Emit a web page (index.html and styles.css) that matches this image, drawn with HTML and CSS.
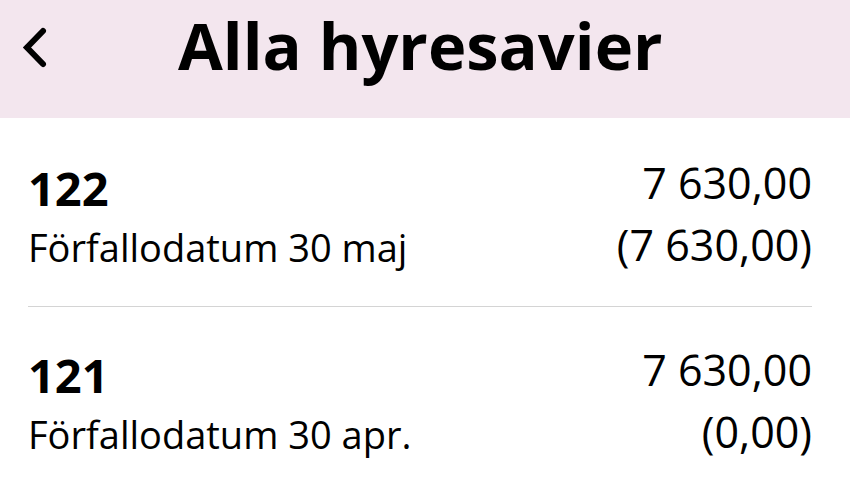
FILE: index.html
```html
<!DOCTYPE html>
<html lang="sv">
<head>
<meta charset="utf-8">
<link rel="stylesheet" href="styles.css">
</head>
<body>
<header class="topbar">
  <button class="back" aria-label="Tillbaka">
    <svg width="30" height="44" viewBox="0 0 30 44"><path d="M25 6 L9 22.5 L25 39" fill="none" stroke="#000" stroke-width="6" stroke-linecap="round" stroke-linejoin="miter"/></svg>
  </button>
  <h1 class="title">Alla hyresavier</h1>
</header>
<main class="list">
  <div class="row">
    <div class="left">
      <div class="num">122</div>
      <div class="due">Förfallodatum 30 maj</div>
    </div>
    <div class="right">
      <div class="amount">7 630,00</div>
      <div class="paid">(7 630,00)</div>
    </div>
  </div>
  <div class="row">
    <div class="left">
      <div class="num">121</div>
      <div class="due">Förfallodatum 30 apr.</div>
    </div>
    <div class="right">
      <div class="amount">7 630,00</div>
      <div class="paid">(0,00)</div>
    </div>
  </div>
</main>
</body>
</html>
```
FILE: styles.css
```css
* { box-sizing: border-box; }
html, body { margin: 0; padding: 0; background: #fff; }
body { font-family: "Open Sans", "Noto Sans", sans-serif; color: #000; width: 850px; height: 478px; overflow: hidden; }
.topbar {
  height: 118px;
  background: #f3e6ee;
  display: flex;
  align-items: flex-start;
  padding-left: 18px;
}
.back {
  background: none; border: 0; padding: 0; margin: 25px 0 0 0;
  width: 36px; height: 44px;
  display: flex; align-items: flex-start; justify-content: flex-start;
}
.back svg { display: block; }
.title {
  margin: 13px 0 0 124px;
  font-size: 65px;
  font-weight: 700;
  line-height: 64px;
}
.list { padding: 0 38px 0 28px; }
.row {
  display: flex;
  justify-content: space-between;
  align-items: flex-start;
  padding: 42px 0 21px;
  border-bottom: 1.5px solid #d4d4d4;
}
.row:last-child { border-bottom: 0; padding-top: 40px; }
.left, .right { display: flex; flex-direction: column; }
.right { align-items: flex-end; }
.num { font-size: 47px; font-weight: 700; line-height: 56px; }
.due { font-size: 38px; line-height: 62px; }
.amount { font-size: 43px; line-height: 45px; }
.paid { font-size: 43px; line-height: 80px; }
```
